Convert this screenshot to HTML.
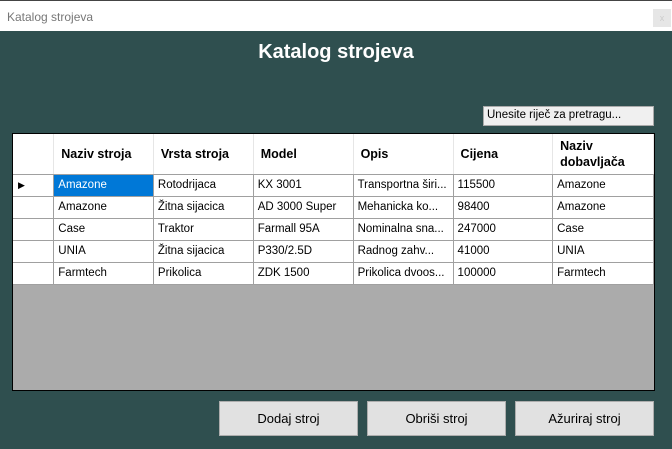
<!DOCTYPE html>
<html><head><meta charset="utf-8"><style>
*{margin:0;padding:0;box-sizing:border-box}
body{width:672px;height:449px;background:#2f4f4f;position:relative;overflow:hidden;font-family:"Liberation Sans",sans-serif}
.tb{position:absolute;left:0;top:0;width:672px;height:31px;background:#fff;border-top:1px solid #444}
.tb span{position:absolute;left:7px;top:9px;font-size:12px;color:#777}
.x{position:absolute;left:653px;top:8px;width:18px;height:18px;background:#e6e6e6;color:#ccc;font-size:9px;text-align:center;line-height:18px}
h1{position:absolute;left:0;width:672px;top:41px;text-align:center;color:#fff;font-size:20px;font-weight:bold}
.search{position:absolute;left:483px;top:106px;width:171px;height:20px;background:#f0f0f0;border:1px solid #aaa;font-size:11.5px;padding:2px 3px;color:#000}
.grid{position:absolute;left:12px;top:133px;width:643px;height:258px;background:#ababab;border:1px solid #000}
table{border-collapse:collapse;background:#fff;font-size:11.5px}
td{border:1px solid #a0a0a0;height:22px;padding:0 4px;white-space:nowrap;overflow:hidden}
th{height:40px;text-align:left;padding:0 7px;font-size:12.5px;font-weight:bold;border-right:1px solid #e6e6e6;border-bottom:1px solid #a0a0a0;line-height:16px}
tr td:first-child{border-left:none}
.sel{background:#0078d7;color:#fff}
.btn{position:absolute;top:401px;width:139px;height:35px;background:#e1e1e1;border:1px solid #adadad;font-size:13px;text-align:center;line-height:33px;color:#000}
</style></head><body>
<div class="tb"><span>Katalog strojeva</span><div class="x">x</div></div>
<h1>Katalog strojeva</h1>
<div class="search">Unesite riječ za pretragu...</div>
<div class="grid">
<table>
<colgroup><col style="width:41px"><col style="width:100px"><col style="width:100px"><col style="width:100px"><col style="width:100px"><col style="width:100px"><col style="width:101px"></colgroup>
<tr><th></th><th>Naziv stroja</th><th>Vrsta stroja</th><th>Model</th><th>Opis</th><th>Cijena</th><th>Naziv<br>dobavljača</th></tr>
<tr><td style="font-size:9px;padding-left:5px">&#9654;</td><td class="sel">Amazone</td><td>Rotodrijaca</td><td>KX 3001</td><td>Transportna širi...</td><td>115500</td><td>Amazone</td></tr>
<tr><td></td><td>Amazone</td><td>Žitna sijacica</td><td>AD 3000 Super</td><td>Mehanicka ko...</td><td>98400</td><td>Amazone</td></tr>
<tr><td></td><td>Case</td><td>Traktor</td><td>Farmall 95A</td><td>Nominalna sna...</td><td>247000</td><td>Case</td></tr>
<tr><td></td><td>UNIA</td><td>Žitna sijacica</td><td>P330/2.5D</td><td>Radnog zahv...</td><td>41000</td><td>UNIA</td></tr>
<tr><td></td><td>Farmtech</td><td>Prikolica</td><td>ZDK 1500</td><td>Prikolica dvoos...</td><td>100000</td><td>Farmtech</td></tr>
</table>
</div>
<div class="btn" style="left:219px">Dodaj stroj</div>
<div class="btn" style="left:367px">Obriši stroj</div>
<div class="btn" style="left:515px">Ažuriraj stroj</div>
</body></html>
